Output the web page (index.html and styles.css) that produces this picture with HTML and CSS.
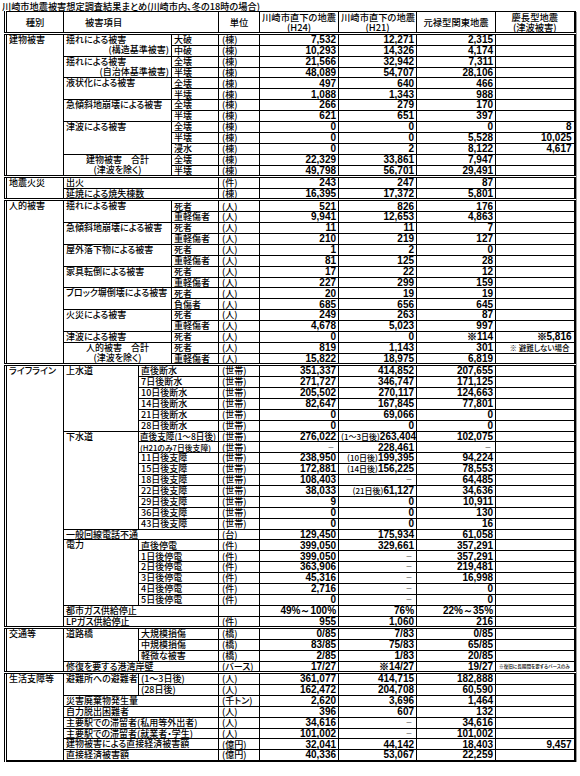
FILE: index.html
```
<!DOCTYPE html>
<html lang="ja">
<head>
<meta charset="utf-8">
<title>川崎市地震被害想定調査結果まとめ</title>
<link rel="stylesheet" href="styles.css">
</head>
<body>
<div class="title">川崎市地震被害想定調査結果まとめ(川崎市内、冬の18時の場合)</div>
<table class="sheet">
<colgroup>
<col class="c0"><col class="c1"><col class="c2"><col class="c3"><col class="c4"><col class="c5"><col class="c6"><col class="c7"><col class="c8">
</colgroup>
<thead>
<tr>
<th>種別</th>
<th colspan="3" class="hitem">被害項目</th>
<th>単位</th>
<th>川崎市直下の地震<br>(H24)</th>
<th>川崎市直下の地震<br>(H21)</th>
<th>元禄型関東地震</th>
<th>慶長型地震<br>(津波被害)</th>
</tr>
</thead>
<tbody>
<tr class="sec"><td rowspan="13" class="k">建物被害</td><td colspan="2" rowspan="2" class="l"><div>揺れによる被害</div><div class="r">(構造基準被害)</div></td><td class="s">大破</td><td class="u">(棟)</td><td class="n">7,532</td><td class="n">12,271</td><td class="n">2,315</td><td class="n"></td></tr>
<tr><td class="s">中破</td><td class="u">(棟)</td><td class="n">10,293</td><td class="n">14,326</td><td class="n">4,174</td><td class="n"></td></tr>
<tr><td colspan="2" rowspan="2" class="l"><div>揺れによる被害</div><div class="r">(自治体基準被害)</div></td><td class="s">全壊</td><td class="u">(棟)</td><td class="n">21,566</td><td class="n">32,942</td><td class="n">7,311</td><td class="n"></td></tr>
<tr><td class="s">半壊</td><td class="u">(棟)</td><td class="n">48,089</td><td class="n">54,707</td><td class="n">28,106</td><td class="n"></td></tr>
<tr><td colspan="2" rowspan="2" class="l">液状化による被害</td><td class="s">全壊</td><td class="u">(棟)</td><td class="n">497</td><td class="n">640</td><td class="n">466</td><td class="n"></td></tr>
<tr><td class="s">半壊</td><td class="u">(棟)</td><td class="n">1,088</td><td class="n">1,343</td><td class="n">988</td><td class="n"></td></tr>
<tr><td colspan="2" rowspan="2" class="l">急傾斜地崩壊による被害</td><td class="s">全壊</td><td class="u">(棟)</td><td class="n">266</td><td class="n">279</td><td class="n">170</td><td class="n"></td></tr>
<tr><td class="s">半壊</td><td class="u">(棟)</td><td class="n">621</td><td class="n">651</td><td class="n">397</td><td class="n"></td></tr>
<tr><td colspan="2" rowspan="3" class="l">津波による被害</td><td class="s">全壊</td><td class="u">(棟)</td><td class="n">0</td><td class="n">0</td><td class="n">0</td><td class="n">8</td></tr>
<tr><td class="s">半壊</td><td class="u">(棟)</td><td class="n">0</td><td class="n">0</td><td class="n">5,528</td><td class="n">10,025</td></tr>
<tr><td class="s">浸水</td><td class="u">(棟)</td><td class="n">0</td><td class="n">2</td><td class="n">8,122</td><td class="n">4,617</td></tr>
<tr><td colspan="2" rowspan="2" class="l ctr"><div>建物被害　合計</div><div>(津波を除く)</div></td><td class="s">全壊</td><td class="u">(棟)</td><td class="n">22,329</td><td class="n">33,861</td><td class="n">7,947</td><td class="n"></td></tr>
<tr><td class="s">半壊</td><td class="u">(棟)</td><td class="n">49,798</td><td class="n">56,701</td><td class="n">29,491</td><td class="n"></td></tr>

<tr class="sec"><td rowspan="2" class="k">地震火災</td><td colspan="3" class="l">出火</td><td class="u">(件)</td><td class="n">243</td><td class="n">247</td><td class="n">87</td><td class="n"></td></tr>
<tr><td colspan="3" class="l">延焼による焼失棟数</td><td class="u">(棟)</td><td class="n">16,395</td><td class="n">17,372</td><td class="n">5,801</td><td class="n"></td></tr>

<tr class="sec"><td rowspan="15" class="k">人的被害</td><td colspan="2" rowspan="2" class="l">揺れによる被害</td><td class="s">死者</td><td class="u">(人)</td><td class="n">521</td><td class="n">826</td><td class="n">176</td><td class="n"></td></tr>
<tr><td class="s">重軽傷者</td><td class="u">(人)</td><td class="n">9,941</td><td class="n">12,653</td><td class="n">4,863</td><td class="n"></td></tr>
<tr><td colspan="2" rowspan="2" class="l">急傾斜地崩壊による被害</td><td class="s">死者</td><td class="u">(人)</td><td class="n">11</td><td class="n">11</td><td class="n">7</td><td class="n"></td></tr>
<tr><td class="s">重軽傷者</td><td class="u">(人)</td><td class="n">210</td><td class="n">219</td><td class="n">127</td><td class="n"></td></tr>
<tr><td colspan="2" rowspan="2" class="l">屋外落下物による被害</td><td class="s">死者</td><td class="u">(人)</td><td class="n">1</td><td class="n">2</td><td class="n">0</td><td class="n"></td></tr>
<tr><td class="s">重軽傷者</td><td class="u">(人)</td><td class="n">81</td><td class="n">125</td><td class="n">28</td><td class="n"></td></tr>
<tr><td colspan="2" rowspan="2" class="l">家具転倒による被害</td><td class="s">死者</td><td class="u">(人)</td><td class="n">17</td><td class="n">22</td><td class="n">12</td><td class="n"></td></tr>
<tr><td class="s">重軽傷者</td><td class="u">(人)</td><td class="n">227</td><td class="n">299</td><td class="n">159</td><td class="n"></td></tr>
<tr><td colspan="2" rowspan="2" class="l">ブロック塀倒壊による被害</td><td class="s">死者</td><td class="u">(人)</td><td class="n">20</td><td class="n">19</td><td class="n">19</td><td class="n"></td></tr>
<tr><td class="s">負傷者</td><td class="u">(人)</td><td class="n">685</td><td class="n">656</td><td class="n">645</td><td class="n"></td></tr>
<tr><td colspan="2" rowspan="2" class="l">火災による被害</td><td class="s">死者</td><td class="u">(人)</td><td class="n">249</td><td class="n">263</td><td class="n">87</td><td class="n"></td></tr>
<tr><td class="s">重軽傷者</td><td class="u">(人)</td><td class="n">4,678</td><td class="n">5,023</td><td class="n">997</td><td class="n"></td></tr>
<tr><td colspan="2" class="l">津波による被害</td><td class="s">死者</td><td class="u">(人)</td><td class="n">0</td><td class="n">0</td><td class="n">※114</td><td class="n">※5,816</td></tr>
<tr><td colspan="2" rowspan="2" class="l ctr"><div>人的被害　合計</div><div>(津波を除く)</div></td><td class="s">死者</td><td class="u">(人)</td><td class="n">819</td><td class="n">1,143</td><td class="n">301</td><td class="note">※ 避難しない場合</td></tr>
<tr><td class="s">重軽傷者</td><td class="u">(人)</td><td class="n">15,822</td><td class="n">18,975</td><td class="n">6,819</td><td class="n"></td></tr>

<tr class="sec"><td rowspan="24" class="k">ライフライン</td><td rowspan="6" class="l">上水道</td><td colspan="2" class="s">直後断水</td><td class="u">(世帯)</td><td class="n">351,337</td><td class="n">414,852</td><td class="n">207,655</td><td class="n"></td></tr>
<tr><td colspan="2" class="s">7日後断水</td><td class="u">(世帯)</td><td class="n">271,727</td><td class="n">346,747</td><td class="n">171,125</td><td class="n"></td></tr>
<tr><td colspan="2" class="s">10日後断水</td><td class="u">(世帯)</td><td class="n">205,502</td><td class="n">270,117</td><td class="n">124,663</td><td class="n"></td></tr>
<tr><td colspan="2" class="s">14日後断水</td><td class="u">(世帯)</td><td class="n">82,647</td><td class="n">167,845</td><td class="n">77,801</td><td class="n"></td></tr>
<tr><td colspan="2" class="s">21日後断水</td><td class="u">(世帯)</td><td class="n">0</td><td class="n">69,066</td><td class="n">0</td><td class="n"></td></tr>
<tr><td colspan="2" class="s">28日後断水</td><td class="u">(世帯)</td><td class="n">0</td><td class="n">0</td><td class="n">0</td><td class="n"></td></tr>
<tr><td rowspan="9" class="l">下水道</td><td colspan="2" class="s sm">直後支障(1～8日後)</td><td class="u">(世帯)</td><td class="n">276,022</td><td class="n"><span class="pre">(1～3日後)</span>263,404</td><td class="n">102,075</td><td class="n"></td></tr>
<tr><td colspan="2" class="s xs">(H21のみ7日後支障)</td><td class="u">(世帯)</td><td class="n d">−</td><td class="n">228,461</td><td class="n d">−</td><td class="n"></td></tr>
<tr><td colspan="2" class="s">11日後支障</td><td class="u">(世帯)</td><td class="n">238,950</td><td class="n"><span class="pre">(10日後)</span>199,395</td><td class="n">94,224</td><td class="n"></td></tr>
<tr><td colspan="2" class="s">15日後支障</td><td class="u">(世帯)</td><td class="n">172,881</td><td class="n"><span class="pre">(14日後)</span>156,225</td><td class="n">78,553</td><td class="n"></td></tr>
<tr><td colspan="2" class="s">18日後支障</td><td class="u">(世帯)</td><td class="n">108,403</td><td class="n d">−</td><td class="n">64,485</td><td class="n"></td></tr>
<tr><td colspan="2" class="s">22日後支障</td><td class="u">(世帯)</td><td class="n">38,033</td><td class="n"><span class="pre">(21日後)</span>61,127</td><td class="n">34,636</td><td class="n"></td></tr>
<tr><td colspan="2" class="s">29日後支障</td><td class="u">(世帯)</td><td class="n">9</td><td class="n">0</td><td class="n">10,911</td><td class="n"></td></tr>
<tr><td colspan="2" class="s">36日後支障</td><td class="u">(世帯)</td><td class="n">0</td><td class="n">0</td><td class="n">130</td><td class="n"></td></tr>
<tr><td colspan="2" class="s">43日後支障</td><td class="u">(世帯)</td><td class="n">0</td><td class="n">0</td><td class="n">16</td><td class="n"></td></tr>
<tr><td colspan="3" class="l">一般回線電話不通</td><td class="u">(台)</td><td class="n">129,450</td><td class="n">175,934</td><td class="n">61,058</td><td class="n"></td></tr>
<tr><td rowspan="6" class="l">電力</td><td colspan="2" class="s">直後停電</td><td class="u">(件)</td><td class="n">399,050</td><td class="n">329,661</td><td class="n">357,291</td><td class="n"></td></tr>
<tr><td colspan="2" class="s">1日後停電</td><td class="u">(件)</td><td class="n">399,050</td><td class="n d">−</td><td class="n">357,291</td><td class="n"></td></tr>
<tr><td colspan="2" class="s">2日後停電</td><td class="u">(件)</td><td class="n">363,906</td><td class="n d">−</td><td class="n">219,481</td><td class="n"></td></tr>
<tr><td colspan="2" class="s">3日後停電</td><td class="u">(件)</td><td class="n">45,316</td><td class="n d">−</td><td class="n">16,998</td><td class="n"></td></tr>
<tr><td colspan="2" class="s">4日後停電</td><td class="u">(件)</td><td class="n">2,716</td><td class="n d">−</td><td class="n">0</td><td class="n"></td></tr>
<tr><td colspan="2" class="s">5日後停電</td><td class="u">(件)</td><td class="n">0</td><td class="n d">−</td><td class="n">0</td><td class="n"></td></tr>
<tr><td colspan="3" class="l">都市ガス供給停止</td><td class="u"></td><td class="n">49%～100%</td><td class="n">76%</td><td class="n">22%～35%</td><td class="n"></td></tr>
<tr><td colspan="3" class="l">LPガス供給停止</td><td class="u">(件)</td><td class="n">955</td><td class="n">1,060</td><td class="n">216</td><td class="n"></td></tr>

<tr class="sec"><td rowspan="4" class="k">交通等</td><td rowspan="3" class="l">道路橋</td><td colspan="2" class="s">大規模損傷</td><td class="u">(橋)</td><td class="n">0/85</td><td class="n">7/83</td><td class="n">0/85</td><td class="n"></td></tr>
<tr><td colspan="2" class="s">中規模損傷</td><td class="u">(橋)</td><td class="n">83/85</td><td class="n">75/83</td><td class="n">65/85</td><td class="n"></td></tr>
<tr><td colspan="2" class="s">軽微な被害</td><td class="u">(橋)</td><td class="n">2/85</td><td class="n">1/83</td><td class="n">20/85</td><td class="n"></td></tr>
<tr><td colspan="3" class="l">修復を要する港湾岸壁</td><td class="u">(バース)</td><td class="n">17/27</td><td class="n">※14/27</td><td class="n">19/27</td><td class="tiny">※復旧に長期間を要するバースのみ</td></tr>

<tr class="sec"><td rowspan="8" class="k">生活支障等</td><td rowspan="2" class="l">避難所への避難者</td><td colspan="2" class="s">(1～3日後)</td><td class="u">(人)</td><td class="n">361,077</td><td class="n">414,715</td><td class="n">182,888</td><td class="n"></td></tr>
<tr><td colspan="2" class="s">(28日後)</td><td class="u">(人)</td><td class="n">162,472</td><td class="n">204,708</td><td class="n">60,590</td><td class="n"></td></tr>
<tr><td colspan="3" class="l">災害廃棄物発生量</td><td class="u">(千トン)</td><td class="n">2,620</td><td class="n">3,696</td><td class="n">1,464</td><td class="n"></td></tr>
<tr><td colspan="3" class="l">自力脱出困難者</td><td class="u">(人)</td><td class="n">396</td><td class="n">607</td><td class="n">132</td><td class="n"></td></tr>
<tr><td colspan="3" class="l">主要駅での滞留者(私用等外出者)</td><td class="u">(人)</td><td class="n">34,616</td><td class="n d">−</td><td class="n">34,616</td><td class="n"></td></tr>
<tr><td colspan="3" class="l">主要駅での滞留者(就業者・学生)</td><td class="u">(人)</td><td class="n">101,002</td><td class="n d">−</td><td class="n">101,002</td><td class="n"></td></tr>
<tr><td colspan="3" class="l">建物被害による直接経済被害額</td><td class="u">(億円)</td><td class="n">32,041</td><td class="n">44,142</td><td class="n">18,403</td><td class="n">9,457</td></tr>
<tr><td colspan="3" class="l">直接経済被害額</td><td class="u">(億円)</td><td class="n">40,336</td><td class="n">53,067</td><td class="n">22,259</td><td class="n"></td></tr>
</tbody>
</table>
</body>
</html>
```

FILE: styles.css
```
html, body {
  margin: 0;
  padding: 0;
  background: #fff;
}

body {
  font-family: "Noto Sans CJK JP", "Noto Sans", sans-serif;
  font-feature-settings: "palt";
  font-weight: 500;
  color: #000;
}

.title {
  height: 9px;
  padding: 2px 0 0 2px;
  font-size: 9.2px;
  line-height: 9px;
  white-space: nowrap;
}

.sheet {
  margin-left: 4px;
  width: 569px;
  table-layout: fixed;
  border-collapse: collapse;
  border-top: 1px solid #000;
  border-left: 3px double #000;
  border-right: 2px solid #000;
  border-bottom: 2px solid #000;
  box-shadow: 1px 1px 0 #9a9a9a;
  font-size: 9px;
}

.sheet col.c0 { width: 58px; }
.sheet col.c1 { width: 75px; }
.sheet col.c2 { width: 33px; }
.sheet col.c3 { width: 47px; }
.sheet col.c4 { width: 41px; }
.sheet col.c5 { width: 79px; }
.sheet col.c6 { width: 78px; }
.sheet col.c7 { width: 79px; }
.sheet col.c8 { width: 79px; }

.sheet th,
.sheet td {
  border: 1px solid #000;
  padding: 0 2px;
  line-height: 9.5px;
  white-space: nowrap;
  overflow: hidden;
}

.sheet th {
  height: 18px;
  font-weight: 500;
  font-size: 9.3px;
  line-height: 10px;
  text-align: center;
  vertical-align: middle;
  border-bottom: 3px double #000;
}

.sheet th.hitem {
  text-align: left;
  padding-left: 21px;
}

.sheet tbody tr { height: 10.9px; }
.sheet tbody tr.sec { height: 11.8px; }
.sheet tbody tr.sec > td { border-top: 3px double #000; }

.sheet td.k {
  vertical-align: top;
  padding-left: 2px;
}

.sheet td.l {
  vertical-align: top;
  text-align: left;
}

.sheet td.l > div { height: 10px; line-height: 10px; }
.sheet td.l .r { text-align: right; }
.sheet td.ctr { text-align: center; }

.sheet td.s { text-align: left; }
.sheet td.sm { font-size: 8.6px; padding-left: 1px; }
.sheet td.xs { font-size: 7.8px; padding-left: 1px; }

.sheet td.u { padding-left: 3px; }

.sheet td.n {
  text-align: right;
  font-family: "Liberation Sans", Arial, sans-serif;
  font-weight: bold;
  font-size: 10px;
}

.sheet td.n .pre {
  font-family: "Noto Sans CJK JP", sans-serif;
  font-weight: 500;
  font-size: 8px;
}

.sheet td.d {
  font-weight: normal;
  color: #777;
  padding-right: 4px;
}

.sheet td.note {
  text-align: right;
  padding-right: 4px;
  font-size: 7.5px;
}

.sheet td.tiny {
  text-align: left;
  padding-left: 3px;
  font-size: 4.6px;
}
```
